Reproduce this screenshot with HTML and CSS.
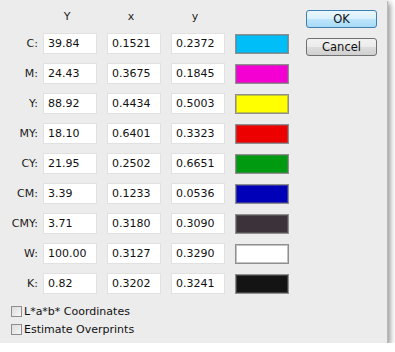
FILE: index.html
```html
<!DOCTYPE html>
<html>
<head>
<meta charset="utf-8">
<link rel="stylesheet" href="styles.css">
</head>
<body>
<div class="dialog">
  <div class="main">
    <div class="row head">
      <span class="lbl"></span>
      <span class="col">Y</span>
      <span class="col">x</span>
      <span class="col">y</span>
    </div>
    <div class="rows">
      <div class="row"><span class="lbl">C:</span><span class="inp">39.84</span><span class="inp">0.1521</span><span class="inp">0.2372</span><span class="sw sw-c"></span></div>
      <div class="row"><span class="lbl">M:</span><span class="inp">24.43</span><span class="inp">0.3675</span><span class="inp">0.1845</span><span class="sw sw-m"></span></div>
      <div class="row"><span class="lbl">Y:</span><span class="inp">88.92</span><span class="inp">0.4434</span><span class="inp">0.5003</span><span class="sw sw-y"></span></div>
      <div class="row"><span class="lbl">MY:</span><span class="inp">18.10</span><span class="inp">0.6401</span><span class="inp">0.3323</span><span class="sw sw-my"></span></div>
      <div class="row"><span class="lbl">CY:</span><span class="inp">21.95</span><span class="inp">0.2502</span><span class="inp">0.6651</span><span class="sw sw-cy"></span></div>
      <div class="row"><span class="lbl">CM:</span><span class="inp">3.39</span><span class="inp">0.1233</span><span class="inp">0.0536</span><span class="sw sw-cm"></span></div>
      <div class="row"><span class="lbl">CMY:</span><span class="inp">3.71</span><span class="inp">0.3180</span><span class="inp">0.3090</span><span class="sw sw-cmy"></span></div>
      <div class="row"><span class="lbl">W:</span><span class="inp">100.00</span><span class="inp">0.3127</span><span class="inp">0.3290</span><span class="sw sw-w"></span></div>
      <div class="row"><span class="lbl">K:</span><span class="inp">0.82</span><span class="inp">0.3202</span><span class="inp">0.3241</span><span class="sw sw-k"></span></div>
    </div>
    <div class="checks">
      <label class="chk"><span class="box"></span>L*a*b* Coordinates</label>
      <label class="chk"><span class="box"></span>Estimate Overprints</label>
    </div>
  </div>
  <div class="side">
    <button class="btn ok">OK</button>
    <button class="btn">Cancel</button>
  </div>
</div>
</body>
</html>
```

FILE: styles.css
```css
html, body {
  margin: 0;
  padding: 0;
  background: #ffffff;
}
body {
  font-family: "DejaVu Sans", Verdana, sans-serif;
  font-size: 11px;
  color: #111;
}
.dialog {
  width: 387px;
  height: 343px;
  background: #ececec;
  display: flex;
  box-shadow: 1px 1px 0 #b8b8b8, 3px 3px 6px rgba(0, 0, 0, 0.45);
}
.main {
  display: flex;
  flex-direction: column;
  padding-top: 10px;
}
.row {
  display: flex;
  align-items: center;
  gap: 10px;
  height: 21px;
}
.row.head {
  height: 14px;
  line-height: 14px;
}
.rows {
  display: flex;
  flex-direction: column;
  gap: 9px;
  margin-top: 9px;
}
.lbl {
  width: 38px;
  margin-right: -5px;
  text-align: right;
  color: #1a1a1a;
}
.col {
  width: 54px;
  text-align: center;
  padding-right: 6px;
  box-sizing: border-box;
  color: #222;
}
.inp {
  width: 54px;
  height: 21px;
  box-sizing: border-box;
  background: #fff;
  border: 1px solid #e1e1e1;
  padding-left: 4px;
  line-height: 19px;
}
.sw {
  width: 54px;
  height: 20px;
  box-sizing: border-box;
  border: 1px solid #8f8f8f;
  box-shadow: inset 0 0 0 1px rgba(120, 120, 120, 0.45);
}
.sw-c { background: #00bff8; }
.sw-m { background: #f400d2; }
.sw-y { background: #ffff00; }
.sw-my { background: #ec0000; }
.sw-cy { background: #009a10; }
.sw-cm { background: #0000b8; }
.sw-cmy { background: #3b3339; }
.sw-w { background: #ffffff; }
.sw-k { background: #141414; }
.checks {
  display: flex;
  flex-direction: column;
  margin-top: 8px;
  padding-left: 11px;
}
.chk {
  display: flex;
  align-items: center;
  height: 18px;
  gap: 2px;
  color: #111;
}
.box {
  width: 11px;
  height: 11px;
  box-sizing: border-box;
  border: 1px solid #8e8e8e;
  background: linear-gradient(135deg, #dcdcdc, #f6f6f6);
}
.side {
  display: flex;
  flex-direction: column;
  gap: 10px;
  padding-top: 10px;
  margin-left: 17px;
}
.btn {
  width: 71px;
  height: 18px;
  padding: 0;
  font-family: "DejaVu Sans", Verdana, sans-serif;
  font-size: 11.5px;
  color: #111;
  border: 1px solid #707070;
  border-radius: 3px;
  background: linear-gradient(#f2f2f2 0%, #ebebeb 50%, #dddddd 51%, #cfcfcf 100%);
}
.btn.ok {
  border-color: #3c7fb1;
  background: linear-gradient(#eaf6fd 0%, #d9f0fc 50%, #bee6fd 51%, #a7d9f5 100%);
}
```
